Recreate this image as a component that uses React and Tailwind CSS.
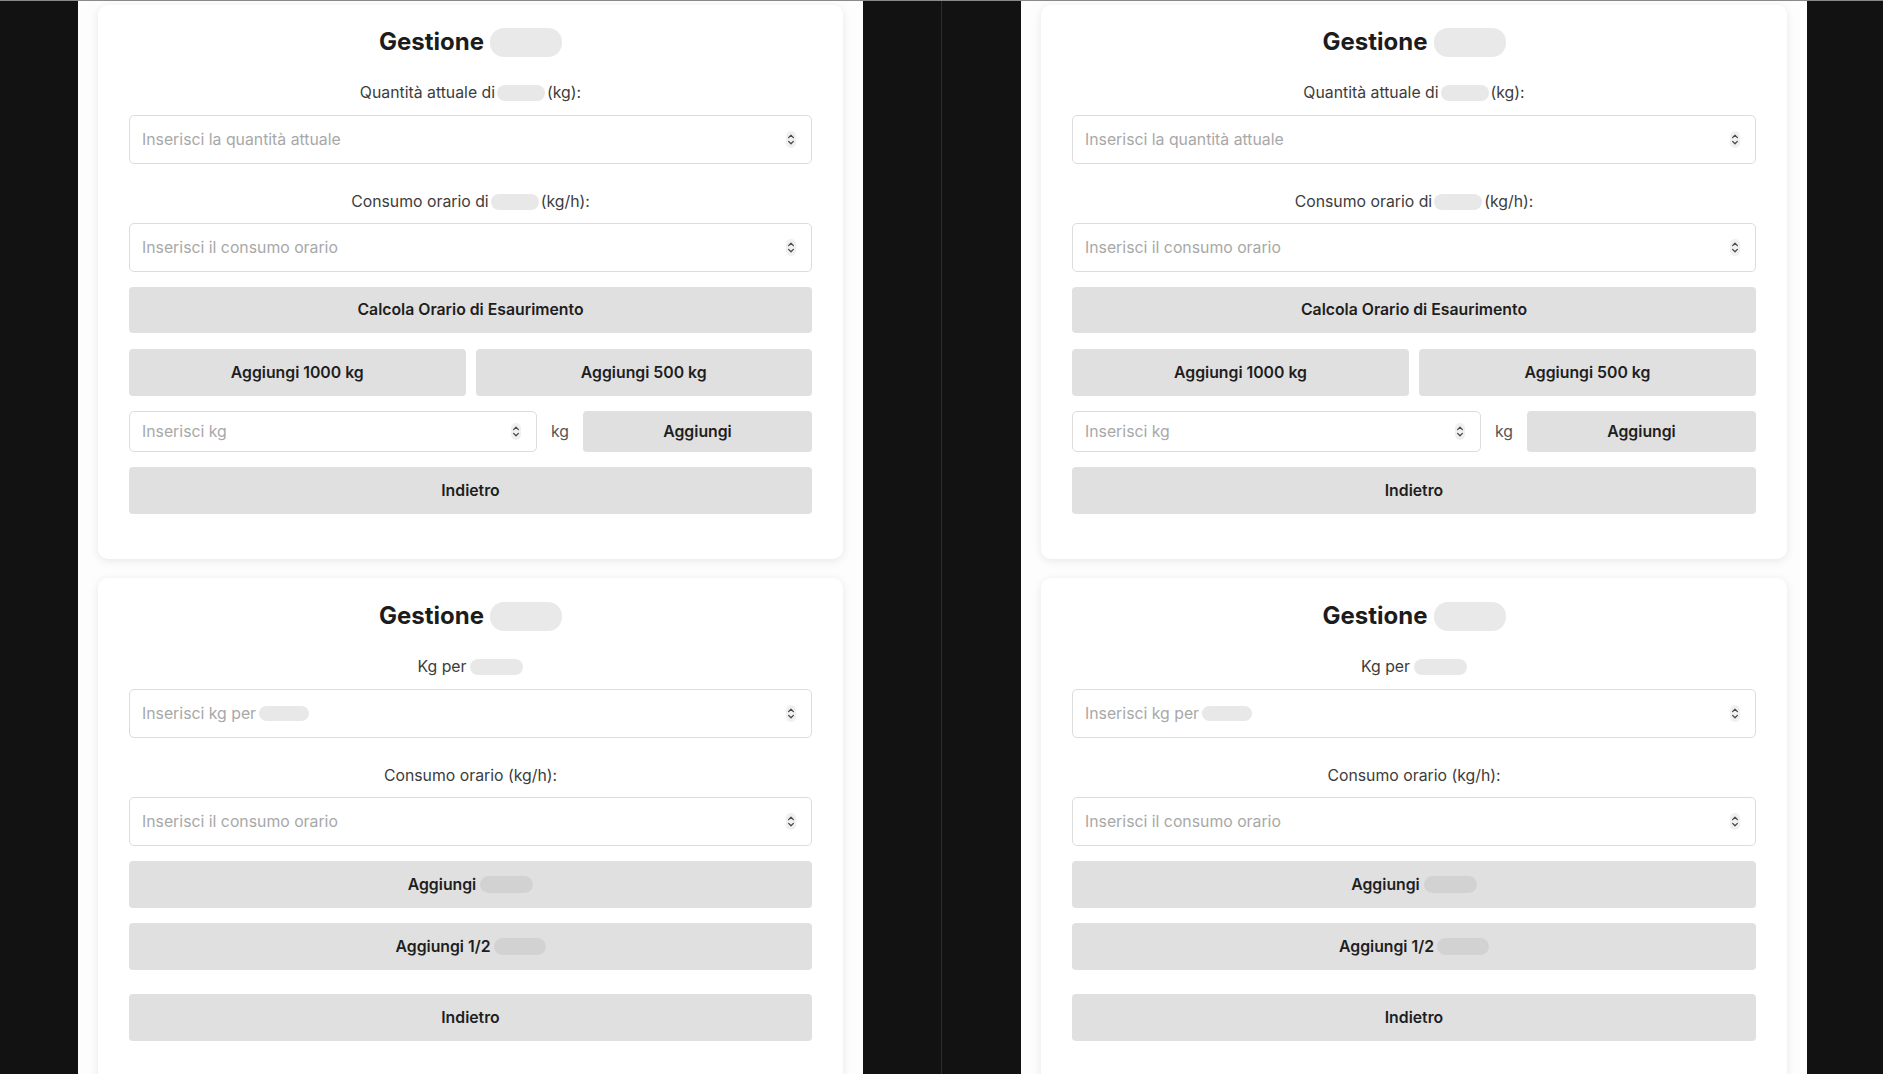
import React from "react";

function Spinner() {
  return (
    <svg width="10" height="17" viewBox="0 0 10 17" className="shrink-0">
      <rect x="0" y="0" width="10" height="17" rx="5" fill="#f0f0f0" />
      <path d="M2.6 6.6 L5 4.2 L7.4 6.6" stroke="#4a4a4a" strokeWidth="1.3" fill="none" strokeLinecap="round" strokeLinejoin="round" />
      <path d="M2.6 10.4 L5 12.8 L7.4 10.4" stroke="#4a4a4a" strokeWidth="1.3" fill="none" strokeLinecap="round" strokeLinejoin="round" />
    </svg>
  );
}

function Field({ children, className = "h-[49px]" }) {
  return (
    <div className={`flex items-center justify-between rounded-[5px] border border-[#dcdcdc] bg-white pl-3 pr-[15px] ${className}`}>
      <span className="flex items-center text-[15.8px] text-[#a8a8a8]">{children}</span>
      <Spinner />
    </div>
  );
}

function Btn({ children, className = "h-[47px]" }) {
  return (
    <div className={`flex items-center justify-center rounded-[4px] bg-[#e0e0e0] text-[15.8px] font-semibold text-[#1e1e1e] ${className}`}>
      {children}
    </div>
  );
}

function Title() {
  return (
    <h2 className="flex h-[30px] items-center justify-center gap-[6px] text-[24px] font-bold text-[#1c1c1c]">
      Gestione
      <span className="h-[29px] w-[72px] rounded-[14px] bg-[#e9e9e9]" />
    </h2>
  );
}

function Label({ children }) {
  return (
    <div className="flex h-5 items-center justify-center text-[15.8px] text-[#3c3c3c]">{children}</div>
  );
}

function Pane({ inner }) {
  return (
    <div className="flex w-[941px]">
      <div className={`flex h-full flex-col gap-[19px] overflow-hidden bg-[#fdfdfd] px-5 pt-1 ${inner}`}>
        {/* Card 1 */}
        <div className="flex flex-col rounded-[10px] bg-white px-[31px] pt-[22px] pb-[45px] shadow-[0_2px_10px_rgba(0,0,0,0.09)]">
          <Title />
          <div className="mt-[26px]">
            <Label>
              Quantità attuale di
              <span className="mx-[2px] h-4 w-[48px] rounded-full bg-[#e8e8e8]" />
              (kg):
            </Label>
          </div>
          <Field className="mt-3 h-[49px]">Inserisci la quantità attuale</Field>
          <div className="mt-[28px]">
            <Label>
              Consumo orario di
              <span className="mx-[2px] h-4 w-[48px] rounded-full bg-[#e8e8e8]" />
              (kg/h):
            </Label>
          </div>
          <Field className="mt-[11px] h-[49px]">Inserisci il consumo orario</Field>
          <Btn className="mt-[15px] h-[46px]">Calcola Orario di Esaurimento</Btn>
          <div className="mt-4 grid grid-cols-2 gap-[10px]">
            <Btn>Aggiungi 1000 kg</Btn>
            <Btn>Aggiungi 500 kg</Btn>
          </div>
          <div className="mt-[15px] flex items-center gap-[14px]">
            <div className="flex-1">
              <Field className="h-[41px]">Inserisci kg</Field>
            </div>
            <span className="text-[15.8px] text-[#555]">kg</span>
            <Btn className="h-[41px] w-[229px]">Aggiungi</Btn>
          </div>
          <Btn className="mt-[15px] h-[47px]">Indietro</Btn>
        </div>

        {/* Card 2 */}
        <div className="flex flex-col rounded-[10px] bg-white px-[31px] pt-[23px] pb-[44px] shadow-[0_2px_10px_rgba(0,0,0,0.09)]">
          <Title />
          <div className="mt-[26px]">
            <Label>
              Kg per
              <span className="ml-[4px] h-4 w-[53px] rounded-full bg-[#e8e8e8]" />
            </Label>
          </div>
          <Field className="mt-3 h-[49px]">
            Inserisci kg per
            <span className="ml-[3px] h-[15px] w-[50px] rounded-full bg-[#e8e8e8]" />
          </Field>
          <div className="mt-[28px]">
            <Label>Consumo orario (kg/h):</Label>
          </div>
          <Field className="mt-[11px] h-[49px]">Inserisci il consumo orario</Field>
          <Btn className="mt-[15px] h-[47px]">
            Aggiungi
            <span className="ml-[4px] h-[17px] w-[53px] rounded-full bg-[#d2d2d2]" />
          </Btn>
          <Btn className="mt-[15px] h-[47px]">
            Aggiungi 1/2
            <span className="ml-[3px] h-[17px] w-[52px] rounded-full bg-[#d2d2d2]" />
          </Btn>
          <Btn className="mt-[24px] h-[47px]">Indietro</Btn>
        </div>
      </div>
    </div>
  );
}

export default function App() {
  return (
    <div
      className="flex h-[1074px] w-[1883px] overflow-hidden border-t border-[#8a8a8a] bg-[#121212]"
      style={{ fontFamily: "Inter, 'Liberation Sans', sans-serif" }}
    >
      <Pane inner="ml-[78px] w-[785px]" />
      <div className="w-px bg-[#2c2c2c]" />
      <Pane inner="ml-[79px] w-[786px]" />
    </div>
  );
}
